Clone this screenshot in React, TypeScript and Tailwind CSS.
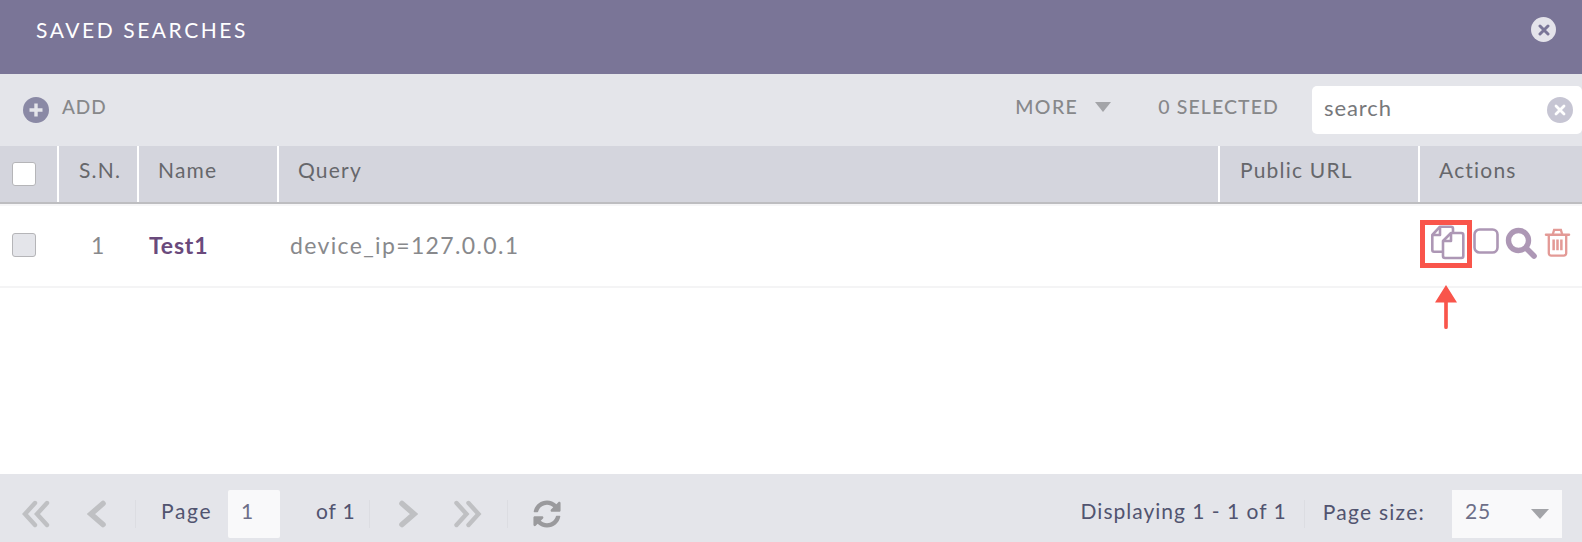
import React from "react";

const font = { fontFamily: '"Lato", "Open Sans", sans-serif' };

function Sep() {
  return <div className="h-[28px] w-px shrink-0 bg-[#dcdde2]" />;
}

export default function App() {
  return (
    <div style={font} className="flex h-[542px] w-[1582px] flex-col overflow-hidden bg-white">
      {/* Title */}
      <div className="flex h-[74px] shrink-0 items-start justify-between bg-[#7a7597] pl-[36px] pr-[26px]">
        <div className="mt-[15px] text-[21px] leading-[30px] tracking-[2.55px] text-white">SAVED SEARCHES</div>
        <div className="mt-[17px] flex h-[25px] w-[25px] items-center justify-center rounded-full bg-[#e4e3ea]">
          <svg viewBox="0 0 12 12" className="h-[12px] w-[12px]" stroke="#7a7597" strokeWidth="3" strokeLinecap="round">
            <path d="M2 2L10 10M10 2L2 10" />
          </svg>
        </div>
      </div>

      {/* Toolbar */}
      <div className="flex h-[72px] shrink-0 items-center bg-[#e4e5ea] pl-[23px]">
        <div className="flex h-[26px] w-[26px] items-center justify-center rounded-full bg-[#8a89a5]">
          <svg viewBox="0 0 14 14" className="h-[14px] w-[14px]" stroke="#e4e5ea" strokeWidth="3.4">
            <path d="M7 0.5V13.5M0.5 7H13.5" />
          </svg>
        </div>
        <div className="ml-[13px] -translate-y-[3px] text-[19px] font-medium tracking-[0.9px] text-[#87888a]">ADD</div>
        <div className="ml-auto -translate-y-[3px] text-[19.5px] font-medium tracking-[1.4px] text-[#87888a]">MORE</div>
        <svg viewBox="0 0 16 10" className="ml-[17px] h-[10px] w-[16px] -translate-y-[3px]">
          <path d="M0 0H16L8 10Z" fill="#a3a4a8" />
        </svg>
        <div className="ml-[47px] -translate-y-[3px] text-[19.5px] font-medium tracking-[1.1px] text-[#87888a]">0 SELECTED</div>
        <div className="ml-[33px] flex h-[48px] w-[270px] items-center justify-between rounded-[5px] bg-white pl-[12px] pr-[9px]">
          <span className="-translate-y-[2px] text-[22px] leading-none tracking-[0.9px] text-[#77787b]">search</span>
          <div className="flex h-[26px] w-[26px] items-center justify-center rounded-full bg-[#c6c5d3]">
            <svg viewBox="0 0 12 12" className="h-[12px] w-[12px]" stroke="#ffffff" strokeWidth="2.8" strokeLinecap="round">
              <path d="M2 2L10 10M10 2L2 10" />
            </svg>
          </div>
        </div>
      </div>

      {/* Table head */}
      <div className="grid h-[56px] shrink-0 grid-cols-[57px_80px_140px_941px_200px_164px] bg-[#d4d5dd] text-[21px] tracking-[1.2px] text-[#66676b]">
        <div className="flex items-center pl-[12px]">
          <div className="h-[24px] w-[24px] rounded-[3px] border border-[#b5b5b8] bg-white" />
        </div>
        <div className="border-l-[2px] border-white pl-[20px] pt-[8px]">S.N.</div>
        <div className="border-l-[2px] border-white pl-[19px] pt-[8px]">Name</div>
        <div className="border-l-[2px] border-white pl-[19px] pt-[8px]">Query</div>
        <div className="border-l-[2px] border-white pl-[20px] pt-[8px]">Public URL</div>
        <div className="border-l-[2px] border-white pl-[19px] pt-[8px]">Actions</div>
      </div>
      <div className="h-[2px] shrink-0 bg-[#bdbdc0]" />
      <div className="h-[2px] shrink-0 bg-[#f6f6f7]" />

      {/* Row */}
      <div className="grid h-[82px] shrink-0 grid-cols-[57px_80px_140px_941px_200px_164px] items-center border-b-[2px] border-[#f4f4f5] text-[#88898c]">
        <div className="pl-[12px]">
          <div className="h-[24px] w-[24px] -translate-y-[1px] rounded-[3px] border border-[#b5b5b8] bg-[#e4e5ea]" />
        </div>
        <div className="-translate-y-[1px] pl-[34px] text-[23px]">1</div>
        <div className="-translate-y-[1px] pl-[12px] text-[23px] font-bold tracking-[0.8px] text-[#6a4a7c]">Test1</div>
        <div className="-translate-y-[1px] pl-[13px] text-[23px] tracking-[1.35px]">device_ip=127.0.0.1</div>
        <div />
        <div className="relative flex h-full items-start pl-[2px]">
          <div className="mt-[14px] flex h-[48px] w-[52px] items-center justify-center border-[5px] border-[#f9554b]">
            <svg viewBox="0 0 36 36" className="h-[36px] w-[36px] shrink-0 overflow-visible" fill="none" stroke="#ad97b5" strokeWidth="2.6" strokeLinejoin="round">
              <path d="M15 25.7H6A1.7 1.7 0 0 1 4.3 24V9L12 0.7H23A2 2 0 0 1 25 2.7V7" />
              <path d="M4.3 9H12V0.7" />
              <path d="M15 15L23 7H33.3A2 2 0 0 1 35.3 9V30A2 2 0 0 1 33.3 32H17A2 2 0 0 1 15 30Z" />
              <path d="M15 15H23V7" />
            </svg>
          </div>
          <svg viewBox="0 0 26 26" className="ml-[1px] mt-[22px] h-[26px] w-[26px]" fill="none" stroke="#ad97b5" strokeWidth="2.6">
            <rect x="1.5" y="1.5" width="23" height="23" rx="5" />
          </svg>
          <svg viewBox="0 0 32 32" className="ml-[6px] mt-[21px] h-[32px] w-[32px]" fill="none" stroke="#ad97b5">
            <circle cx="13.5" cy="13.5" r="10" strokeWidth="5.4" />
            <path d="M21 21L29 29" strokeWidth="5.6" strokeLinecap="round" />
          </svg>
          <svg viewBox="0 0 26 30" className="ml-[7px] mt-[22px] h-[29px] w-[27px]" fill="none" stroke="#e39a96" strokeWidth="2.4">
            <path d="M1 7H25" strokeLinecap="round" />
            <path d="M8 7L9.5 2H16.5L18 7" />
            <path d="M4 7V26A2.5 2.5 0 0 0 6.5 28.5H19.5A2.5 2.5 0 0 0 22 26V7" />
            <path d="M9 12V23M13 12V23M17 12V23" strokeWidth="2.6" />
          </svg>
          <svg viewBox="0 0 24 48" className="absolute left-[17px] top-[77px] h-[48px] w-[22px]" fill="#f9554b">
            <path d="M12 0L24 19H14V46A2 2 0 0 1 10 46V19H0Z" />
          </svg>
        </div>
      </div>

      <div className="flex-1" />

      {/* Footer */}
      <div className="flex h-[68px] shrink-0 items-center bg-[#e4e5ea] pl-[22px] pr-[20px] pt-[12px] text-[21px] text-[#515470]">
        <svg viewBox="0 0 28 28" className="h-[28px] w-[28px] shrink-0" fill="none" stroke="#bfc0c3" strokeWidth="4.4" strokeLinecap="round">
          <path d="M13 3L3 14L13 25" />
          <path d="M25 3L15 14L25 25" />
        </svg>
        <svg viewBox="0 0 20 28" className="ml-[37px] h-[28px] w-[20px] shrink-0" fill="none" stroke="#bfc0c3" strokeWidth="5.6" strokeLinecap="round">
          <path d="M16 3.5L4 14L16 24.5" />
        </svg>
        <div className="ml-[28px]"><Sep /></div>
        <span className="ml-[25px] w-[67px] shrink-0 -translate-y-[3px] tracking-[1.7px]">Page</span>
        <div className="flex h-[48px] w-[52px] shrink-0 items-center rounded-[2px] bg-[#f9f9fa] pl-[13px] text-[#6d6f88]"><span className="-translate-y-[3px]">1</span></div>
        <span className="ml-[36px] w-[53px] shrink-0 -translate-y-[3px] tracking-[0.85px]">of 1</span>
        <Sep />
        <svg viewBox="0 0 20 28" className="ml-[28px] h-[28px] w-[20px] shrink-0" fill="none" stroke="#bfc0c3" strokeWidth="5.6" strokeLinecap="round">
          <path d="M4 3.5L16 14L4 24.5" />
        </svg>
        <svg viewBox="0 0 28 28" className="ml-[35px] h-[28px] w-[29px] shrink-0" fill="none" stroke="#bfc0c3" strokeWidth="4.4" strokeLinecap="round">
          <path d="M3 3L13 14L3 25" />
          <path d="M15 3L25 14L15 25" />
        </svg>
        <div className="ml-[25px]"><Sep /></div>
        <svg viewBox="0 0 512 512" className="ml-[25px] h-[28px] w-[28px] shrink-0" fill="#9a9a9d">
          <path d="M370.72 133.28C339.458 104.008 298.888 87.962 255.848 88c-77.458.068-144.328 53.178-162.791 126.85-1.344 5.363-6.122 9.15-11.651 9.15H24.103c-7.498 0-13.194-6.807-11.807-14.176C33.933 94.924 134.813 8 256 8c66.448 0 126.791 26.136 171.315 68.685L463.03 40.97C478.149 25.851 504 36.559 504 57.941V192c0 13.255-10.745 24-24 24H345.941c-21.382 0-32.09-25.851-16.971-40.971l41.75-41.749zM32 296h134.059c21.382 0 32.09 25.851 16.971 40.971l-41.75 41.75c31.262 29.273 71.835 45.319 114.876 45.28 77.418-.07 144.315-53.144 162.787-126.849 1.344-5.363 6.122-9.15 11.651-9.15h57.304c7.498 0 13.194 6.807 11.807 14.176C478.067 417.076 377.187 504 256 504c-66.448 0-126.791-26.136-171.315-68.685L48.97 471.03C33.851 486.149 8 475.441 8 454.059V320c0-13.255 10.745-24 24-24z" />
        </svg>
        <span className="ml-auto -translate-y-[3px] tracking-[1.0px]">Displaying 1 - 1 of 1</span>
        <div className="ml-[17px]"><Sep /></div>
        <span className="ml-[18px] -translate-y-[2px] tracking-[1.25px]">Page size:</span>
        <div className="ml-[27px] flex h-[48px] w-[110px] items-center justify-between bg-[#f9f9fa] pl-[13px] pr-[13px] text-[#6d6f88]">
          <span className="-translate-y-[3px] tracking-[0.8px]">25</span>
          <svg viewBox="0 0 18 10" className="h-[10px] w-[18px]">
            <path d="M0 0H18L9 10Z" fill="#a3a4a8" />
          </svg>
        </div>
      </div>
    </div>
  );
}
